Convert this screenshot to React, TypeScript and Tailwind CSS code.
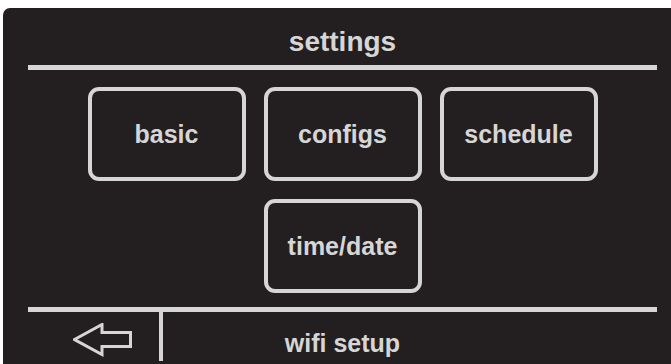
const buttons = [
  { label: "basic", cls: "" },
  { label: "configs", cls: "" },
  { label: "schedule", cls: "" },
  { label: "time/date", cls: "col-start-2" },
];

function BackArrow() {
  return (
    <svg width="60" height="34" viewBox="0 0 60 34" fill="none">
      <polygon
        points="1.5,16.5 29,1.5 29,9.5 57.5,9.5 57.5,23.5 29,23.5 29,31.5"
        stroke="#d6d6d6"
        strokeWidth="3"
        strokeLinejoin="miter"
      />
    </svg>
  );
}

export default function App() {
  return (
    <div
      className="bg-white w-[671px] h-[364px] overflow-hidden pt-[8px] pl-[3px]"
      style={{ fontFamily: '"Liberation Sans", Arial, sans-serif' }}
    >
      {/* panel */}
      <div className="bg-[#231f20] rounded-tl-[7px] w-[668px] h-[356px] pl-[25px] text-[#d6d6d6] font-bold">
        <div className="w-[629px] flex flex-col">
          {/* header */}
          <div className="pt-[20px] mb-[9px] text-center text-[28px] leading-[28px]">
            settings
          </div>
          <div className="h-[5px] bg-[#d6d6d6]" />

          {/* buttons */}
          <div className="mt-[17px] grid grid-cols-[158px_158px_158px] gap-[18px] justify-center">
            {buttons.map((b) => (
              <div
                key={b.label}
                className={`h-[94px] border-[4px] border-[#d6d6d6] rounded-[11px] flex items-center justify-center text-[25px] leading-[25px] ${b.cls}`}
              >
                {b.label}
              </div>
            ))}
          </div>

          {/* footer */}
          <div className="mt-[14px] h-[5px] bg-[#d6d6d6]" />
          <div className="flex">
            <div className="w-[131px] pl-[45px] pt-[11px]">
              <BackArrow />
            </div>
            <div className="w-[4px] h-[49px] bg-[#d6d6d6]" />
            <div className="flex-1 pr-[135px] pt-[19px] text-center text-[25px] leading-[25px]">
              wifi setup
            </div>
          </div>
        </div>
      </div>
    </div>
  );
}
